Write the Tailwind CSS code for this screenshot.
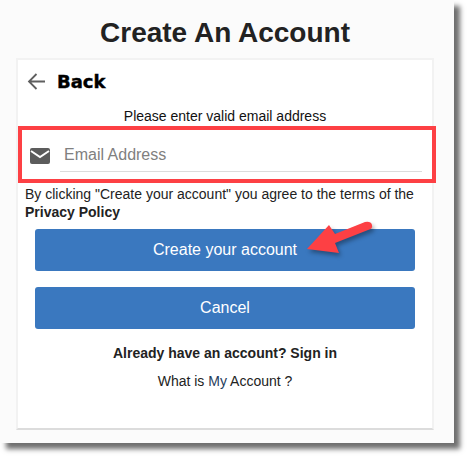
<!DOCTYPE html>
<html lang="en">

<head>
    <meta charset="UTF-8" />
    <title>Create An Account</title>
    <script src="https://cdn.jsdelivr.net/npm/@tailwindcss/browser@4"></script>
</head>

<body class="bg-white h-[459px] w-[469px] overflow-hidden font-['Liberation_Sans',sans-serif]">
    <div class="relative w-[454px] h-[443px] bg-[#fbfbfb] shadow-[6px_6px_5px_#6f6f6f] pt-[15px] pl-4 pr-5">
        <h1 class="text-center text-[28px] leading-9 font-bold text-[#222]">Create An Account</h1>

        <div class="mt-[7px] h-[372px] bg-white border-2 border-[#f2f2f2] border-b-[#dcdcdc]">
            <div class="flex items-center h-[42px] pl-[9px] gap-[11px]">
                <svg class="w-[19px] h-[19px] mt-[1px]" viewBox="0 0 19 19" fill="none" stroke="#5f5f5f" stroke-width="1.8">
                    <path d="M18 9.5H2M9.5 2 2 9.5l7.5 7.5" />
                </svg>
                <span class="font-['DejaVu_Sans',sans-serif] font-bold text-[18px] text-black [-webkit-text-stroke:0.4px_black]">Back</span>
            </div>

            <p class="mt-[4px] text-center text-sm leading-5 text-[#111]">Please enter valid email address</p>

            <div class="flex items-start h-[54px] mt-[4px] pl-[12px] pr-[10px]">
                <svg class="w-5 h-4 mt-[18px] shrink-0" viewBox="0 0 20 16">
                    <rect width="20" height="16" rx="2" fill="#5c5c5c" />
                    <path d="M1 3 10 9l9-6" fill="none" stroke="#fff" stroke-width="2" />
                </svg>
                <div class="ml-[10px] flex-1 h-[40px] mt-[2px] border-b border-[#dcdcdc] pl-[4px] pt-[11px] text-base leading-6 text-[#808080]">Email Address</div>
            </div>

            <p class="mt-[1px] pl-[7px] pr-2 text-sm leading-[18px] text-[#222]">By clicking "Create your account" you agree to the terms of the <b>Privacy Policy</b></p>

            <div class="mt-[8px] mx-[17px] flex flex-col gap-4">
                <button class="h-[42px] rounded-[3px] bg-[#3a78bf] text-white text-base">Create your account</button>
                <button class="h-[42px] rounded-[3px] bg-[#3a78bf] text-white text-base">Cancel</button>
            </div>

            <p class="mt-[14px] text-center text-sm leading-5 font-bold text-[#222]">Already have an account? Sign in</p>
            <p class="mt-2 text-center text-sm leading-5 text-[#222]">What is <span class="text-[#1f3d5c]">My</span> Account ?</p>
        </div>

        <!-- callouts drawn over the page -->
        <div class="absolute left-[18px] top-[126px] w-[418px] h-[57px] border-[4px] border-[#fd4044]"></div>
        <svg class="absolute left-[300px] top-[218px] drop-shadow-[2px_3px_2px_rgba(0,0,0,0.35)]" width="76" height="44" viewBox="0 0 76 44">
            <path d="M7 31 29 7l6 9 30-12q6-1 7 3 1 4-4 5L35 25l4 10Z" fill="#fd4044" />
        </svg>
    </div>
</body>

</html>
